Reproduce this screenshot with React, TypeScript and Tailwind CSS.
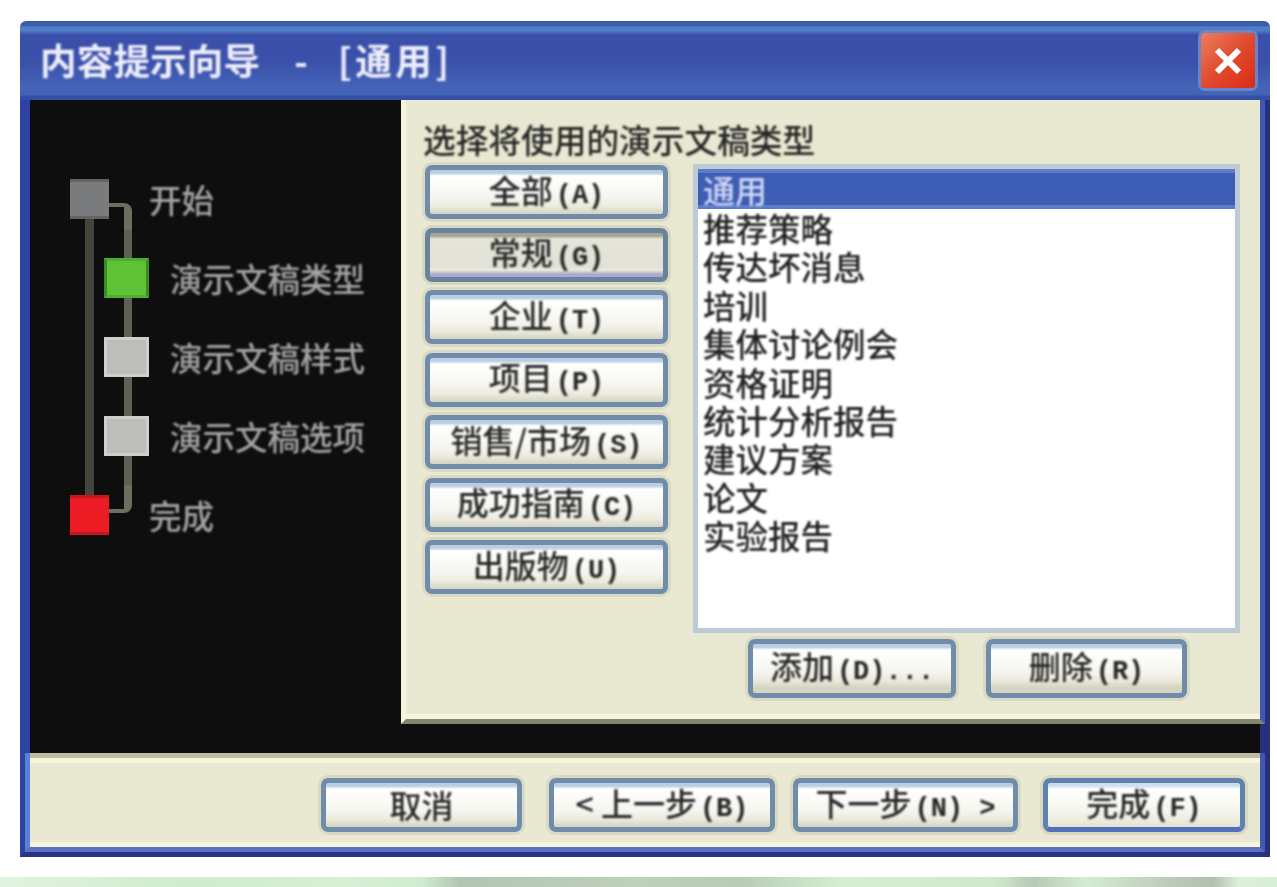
import React from "react";

const cjk = "font-['Noto_Sans_CJK_SC','Liberation_Sans',sans-serif]";

function Txt({ children, className = "" }: { children: React.ReactNode; className?: string }) {
  return <span className={`inline-block whitespace-nowrap font-medium leading-none blur-[1.1px] ${className}`}>{children}</span>;
}

function L({ children }: { children: React.ReactNode }) {
  return <span className="ml-[3px] font-['Liberation_Mono',monospace] text-[27px] font-bold">{children}</span>;
}

function Btn({
  w,
  h = "h-[54px]",
  pressed,
  primary,
  children,
}: {
  w: string;
  h?: string;
  pressed?: boolean;
  primary?: boolean;
  children: React.ReactNode;
}) {
  const tone = pressed
    ? "border-[#67849f] bg-[linear-gradient(to_bottom,#a5a594_0,#a5a594_3px,#e6e5da_6px,#e2e1d6_34px,#ecebdf_37px,#b0aac8_41px,#b0aac8_44px)] shadow-[0_0_0_3px_#d8d8c0]"
    : primary
      ? "border-[#5f82ad] border-b-[#5470bd] bg-[linear-gradient(to_bottom,#cfdff0_0,#cfdff0_3px,#fff_6px,#f5f5ef_28px,#ecebdd_38px,#e4e2d2_44px)] shadow-[0_0_0_3px_#d9d9c2]"
      : "border-[#6f8cab] bg-[linear-gradient(to_bottom,#b9cde3_0,#b9cde3_3px,#fff_6px,#f5f5ef_28px,#ecebdd_36px,#d5d3c2_44px)] shadow-[0_0_0_3px_#d9d9c4]";
  return (
    <div className={`${w} ${h} shrink-0 rounded-[7px] border-[5px] ${tone} flex items-center justify-center pb-[2px] text-[32px] text-[#262626]`}>
      <Txt>{children}</Txt>
    </div>
  );
}

function Node({ color, label, inner }: { color: string; label: string; inner?: boolean }) {
  return (
    <div className={`flex h-[40px] items-center ${inner ? "pl-[74px]" : "pl-[40px]"}`}>
      <div className={`h-[40px] shrink-0 ${inner ? "w-[45px] border-x-[3px]" : "w-[39px]"} border-y-[3px] ${color}`} />
      <Txt className={`text-[32.5px] text-[#a4a4a4] ${inner ? "ml-[21px]" : "ml-[40px]"}`}>{label}</Txt>
    </div>
  );
}

const items = ["推荐策略", "传达坏消息", "培训", "集体讨论例会", "资格证明", "统计分析报告", "建议方案", "论文", "实验报告"];

export default function App() {
  return (
    <div className={`flex h-[887px] w-[1277px] flex-col overflow-hidden bg-white pt-[21px] ${cjk}`}>
      <div className="ml-[20px] flex h-[836px] w-[1250px] flex-col overflow-hidden rounded-t-[6px] blur-[0.7px]">
        {/* Title bar */}
        <div className="flex h-[79px] shrink-0 items-center justify-between bg-[linear-gradient(to_bottom,#3a57a8_0,#3f62b0_5px,#4f7fc9_6px,#4f7ac4_10px,#3a4fa9_14px,#3a50aa_40px,#4564b8_68px,#4263b6_74px,#3450a6_75px)] pl-[20px] pr-[15px]">
          <Txt className="text-[36.5px] !font-bold tracking-[0.2px] text-[#eeeefa]">
            内容提示向导
            <span className="ml-[34px]">-</span>
            <span className="ml-[30px] tracking-[3.5px]">[通用]</span>
          </Txt>
          <div className="flex h-[55px] w-[54px] items-center justify-center rounded-[4px] bg-gradient-to-br from-[#ee7c60] via-[#e04a2c] to-[#d92b18] shadow-[0_0_0_3px_#6a84cc]">
            <svg width="30" height="30" viewBox="0 0 30 30">
              <path d="M4 4 L26 26 M26 4 L4 26" stroke="#fff" strokeWidth="6" />
            </svg>
          </div>
        </div>

        {/* Body */}
        <div className="flex h-[653px] shrink-0 border-l-[10px] border-r-[5px] border-l-[#2c43a3] border-r-[#26307f] bg-[#0e0e0e]">
          <div className="relative w-[371px] shrink-0 bg-[#0e0e0e] pt-[79px]">
            <div className="absolute left-[55px] top-[119px] h-[277px] w-[9px] bg-[#44443c]" />
            <div className="absolute left-[79px] top-[103px] h-[40px] w-[23px] rounded-tr-[8px] border-r-[8px] border-t-[4px] border-[#6d6d60]" />
            <div className="absolute left-[94px] top-[130px] h-[270px] w-[8px] bg-[#5f5f55]" />
            <div className="absolute left-[79px] top-[385px] h-[28px] w-[23px] rounded-br-[8px] border-b-[4px] border-r-[8px] border-[#6d6d60]" />
            <div className="relative flex flex-col gap-[39px]">
              <Node color="bg-[#7a7b7d] border-y-[#636466]" label="开始" />
              <Node inner color="bg-[#5fc234] border-x-[#3a8a2a] border-y-[#4fae30]" label="演示文稿类型" />
              <Node inner color="bg-[#bdbdbb] border-[#cfcfcd]" label="演示文稿样式" />
              <Node inner color="bg-[#bdbdbb] border-[#cfcfcd]" label="演示文稿选项" />
              <Node color="bg-[#ed1c24] border-y-[#c8161e]" label="完成" />
            </div>
          </div>

          <div className="flex w-[864px] shrink-0 flex-col">
            <div className="h-[624px] shrink-0 border-b-[5px] border-l-[5px] border-r-[5px] border-b-[#85856f] border-l-[#f5f3dc] border-r-[#4257b0] bg-[#e9e8d2]">
              <div className="h-[619px] border-b-[5px] border-b-[#f7f4dc] pl-[17px] pt-[23px]">
                <div className="flex h-[32px] items-center text-[32.7px] text-[#262626]">
                  <Txt>选择将使用的演示文稿类型</Txt>
                </div>
                <div className="mt-[9px] flex">
                  <div className="mt-[1px] flex flex-col gap-[8.5px] pl-[2px]">
                    <Btn w="w-[243px]">全部<L>(A)</L></Btn>
                    <Btn w="w-[243px]" pressed>常规<L>(G)</L></Btn>
                    <Btn w="w-[243px]">企业<L>(T)</L></Btn>
                    <Btn w="w-[243px]">项目<L>(P)</L></Btn>
                    <Btn w="w-[243px]">销售/市场<L>(S)</L></Btn>
                    <Btn w="w-[243px]">成功指南<L>(C)</L></Btn>
                    <Btn w="w-[243px]">出版物<L>(U)</L></Btn>
                  </div>
                  <div className="ml-[25px]">
                    <div className="h-[469px] w-[547px] border-[5px] border-[#bccbd4] bg-white">
                      <div className="flex h-[40px] items-center border-y-[4px] border-y-[#5c7cc8] bg-[#3e5db5] pl-[5px] text-[32px] text-[#cfd8f4]">
                        <Txt>通用</Txt>
                      </div>
                      <div className="flex flex-col pl-[5px] text-[32.5px] text-[#222]">
                        {items.map((t) => (
                          <div key={t} className="flex h-[38.4px] items-center">
                            <Txt>{t}</Txt>
                          </div>
                        ))}
                      </div>
                    </div>
                    <div className="mt-[6px] flex gap-[30px] pl-[55px]">
                      <Btn w="w-[208px]" h="h-[59px]">添加<L>(D)...</L></Btn>
                      <Btn w="w-[201px]" h="h-[59px]">删除<L>(R)</L></Btn>
                    </div>
                  </div>
                </div>
              </div>
            </div>
            <div className="flex-1 border-r-[5px] border-r-[#26307f] bg-[#0e0e0e]" />
          </div>
        </div>

        {/* Footer */}
        <div className="flex h-[104px] shrink-0 flex-col border-x-[5px] border-b-[5px] border-x-[#2c43a3] border-r-[#26307f] border-b-[#2a3484]">
          <div className="flex h-[99px] flex-col border-x-[5px] border-b-[5px] border-l-[#5a80d8] border-r-[#4257b0] border-b-[#5a72bd]">
            <div className="flex h-[94px] flex-col border-b-[5px] border-t-[5px] border-b-[#f7f4dc] border-t-[#bcbba4] bg-[#e9e8d2]">
              <div className="h-[5px] shrink-0 bg-[#f7f4dc]" />
              <div className="flex items-center justify-end pr-[15px] pt-[15px]">
                <Btn w="w-[201px]">取消</Btn>
                <div className="ml-[27px]">
                  <Btn w="w-[226px]">&lt; 上一步<L>(B)</L></Btn>
                </div>
                <div className="ml-[18px]">
                  <Btn w="w-[225px]">下一步<L>(N) &gt;</L></Btn>
                </div>
                <div className="ml-[25px]">
                  <Btn w="w-[202px]" primary>完成<L>(F)</L></Btn>
                </div>
              </div>
            </div>
          </div>
        </div>
      </div>

      <div className="mt-[20px] h-[10px] shrink-0 bg-[linear-gradient(to_right,#e2f2e0_0%,#cfeccd_15%,#d8efd6_27%,#d0ecd0_33%,#b4c4b4_36%,#bfd0bc_50%,#b8ccb6_58%,#d6eed2_66%,#cfe8cc_78%,#b8c8b6_81%,#d4ecd2_85%,#bcc8ba_92%,#b2c0b0_95%,#dcf0da_97%,#d8eed6_100%)] blur-[0.7px]" />
    </div>
  );
}
